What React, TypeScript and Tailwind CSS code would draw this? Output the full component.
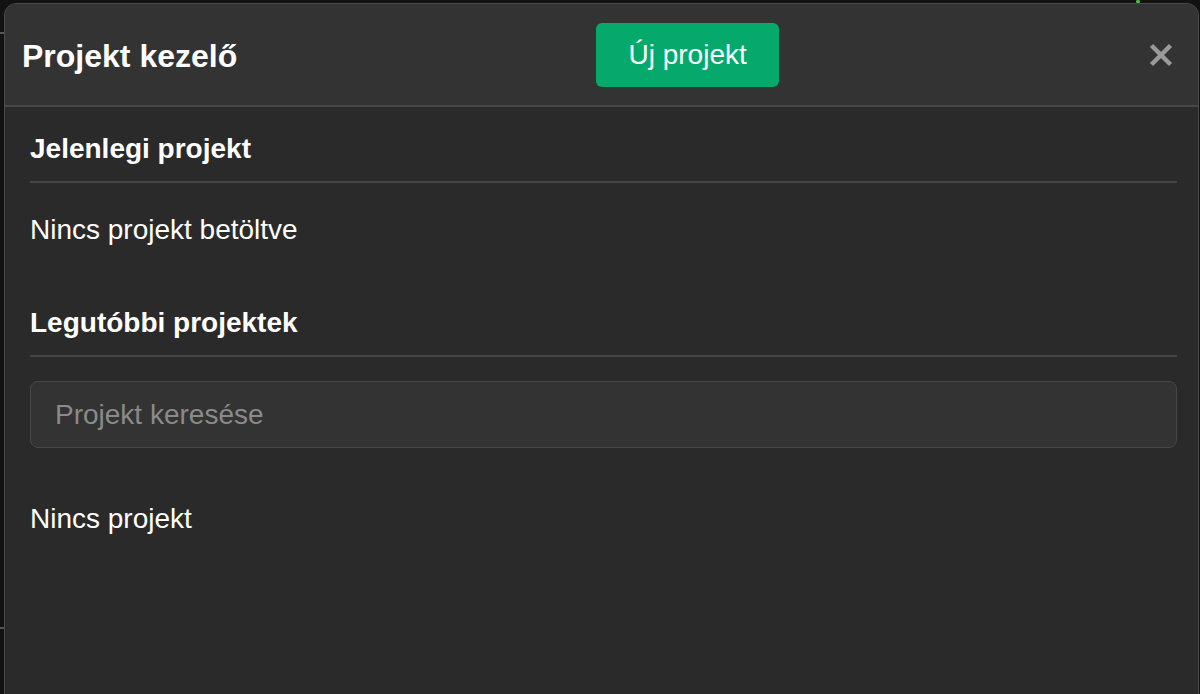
import { useState } from 'react'

function CloseIcon() {
  return (
    <svg width="24" height="24" viewBox="0 0 24 24" fill="none">
      <path d="M2.5 2.5 L21.5 21.5 M21.5 2.5 L2.5 21.5" stroke="#9a9a9a" strokeWidth="4.5" />
    </svg>
  )
}

export default function App() {
  const [query, setQuery] = useState('')

  return (
    <div
      className="relative h-[694px] w-full overflow-hidden bg-[#121212] pt-[3px] pl-[4px] pr-[1px]"
      style={{ fontFamily: '"Liberation Sans", Arial, sans-serif' }}
    >
      {/* things behind the overlay */}
      <div className="absolute left-0 top-[32px] h-[2px] w-[4px] bg-[#555]" />
      <div className="absolute left-0 top-[627px] h-[2px] w-[4px] bg-[#555]" />
      <div className="absolute left-[1136px] top-0 h-[3px] w-[4px] rounded-full bg-[#3fd13f]" />

      <div className="flex h-[700px] flex-col overflow-hidden rounded-t-[12px] border border-[#4a4a4a] bg-[#2a2a2a] text-white">
        {/* Header */}
        <div className="flex h-[103px] shrink-0 items-center justify-between border-b-2 border-[#474747] bg-[#333333] pl-[17px] pr-[25px]">
          <h2 className="pt-[3px] text-[32px] font-bold leading-[37px]">Projekt kezelő</h2>
          <button className="mr-[11px] h-[64px] rounded-[6px] bg-[#06a96c] px-[32px] text-[28px] leading-[32px] text-white">
            Új projekt
          </button>
          <button className="flex h-[24px] w-[24px] items-center justify-center">
            <CloseIcon />
          </button>
        </div>

        {/* Body */}
        <div className="flex flex-col pl-[25px] pr-[21px] pt-[26px]">
          <h3 className="border-b-2 border-[#444] pb-[16px] text-[28px] font-bold leading-[32px]">
            Jelenlegi projekt
          </h3>
          <p className="mt-[31px] text-[28px] leading-[32px]">Nincs projekt betöltve</p>

          <h3 className="mt-[61px] border-b-2 border-[#444] pb-[16px] text-[28px] font-bold leading-[32px]">
            Legutóbbi projektek
          </h3>
          <input
            value={query}
            onChange={(e) => setQuery(e.target.value)}
            placeholder="Projekt keresése"
            className="mt-[24px] h-[67px] w-full rounded-[8px] border border-[#474747] bg-[#333333] px-[24px] text-[28px] text-white placeholder:text-[#8a8a8a] outline-none"
          />
          <p className="mt-[55px] text-[28px] leading-[32px]">Nincs projekt</p>
        </div>
      </div>
    </div>
  )
}
